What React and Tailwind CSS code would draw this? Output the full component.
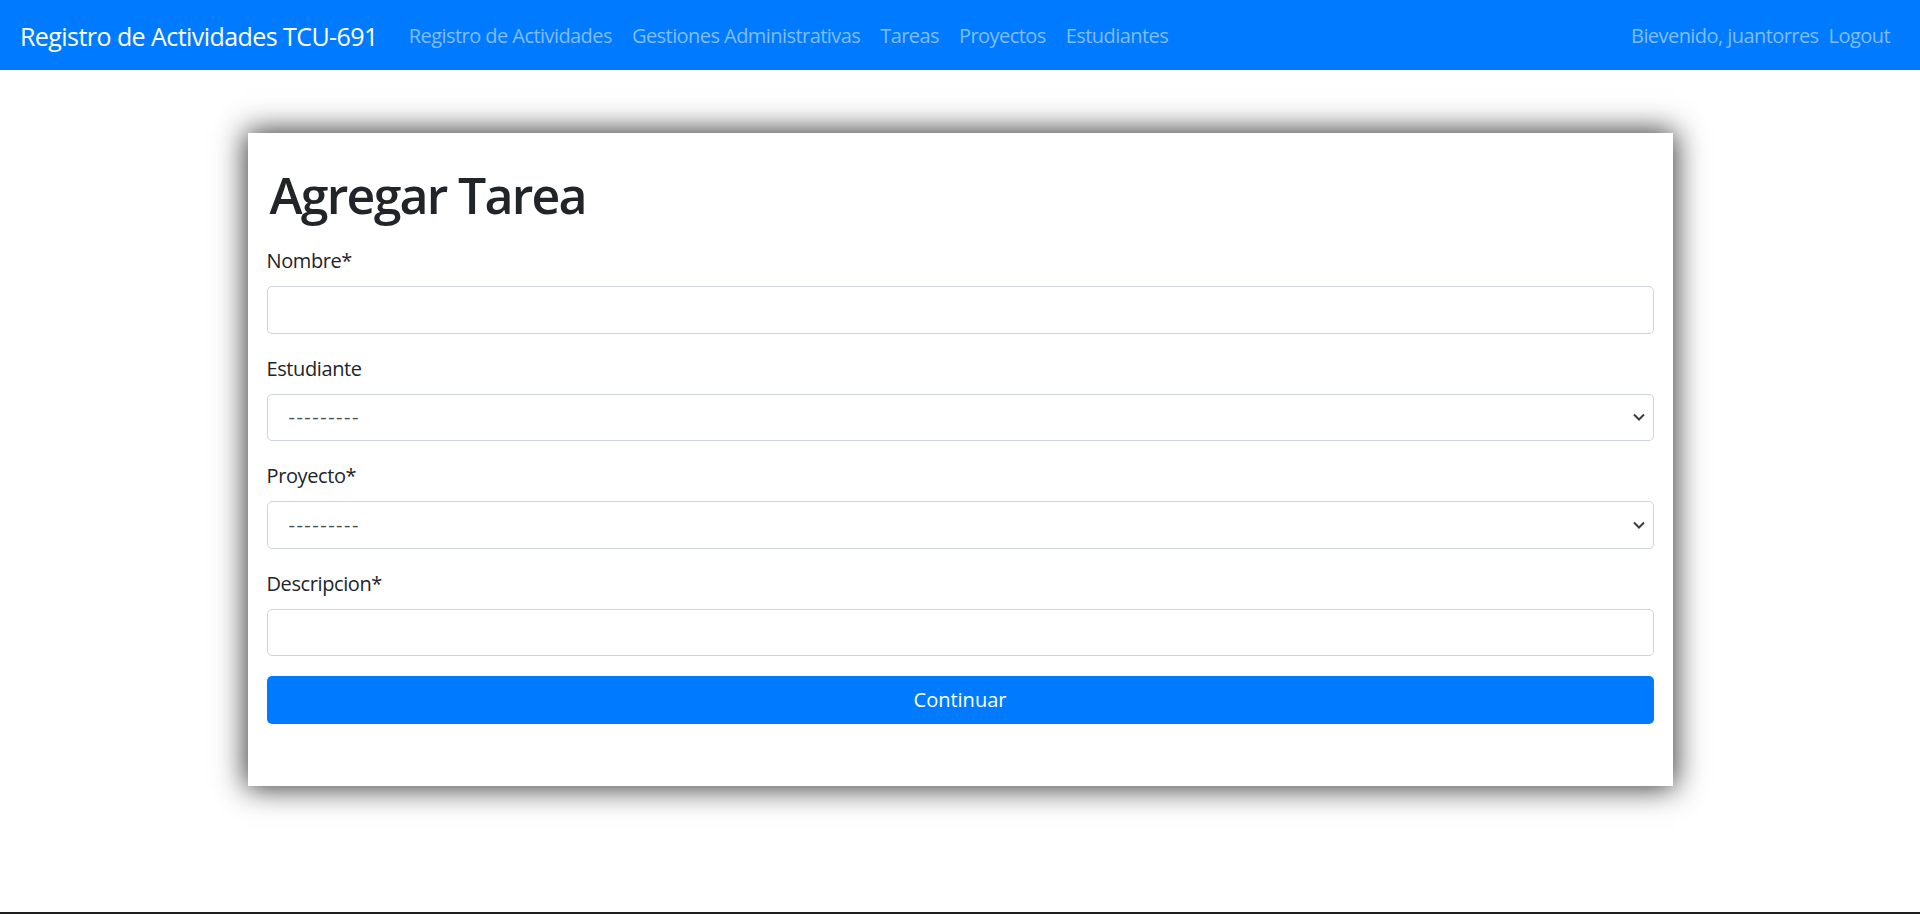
import { useState } from 'react'

const navLinks = ['Registro de Actividades', 'Gestiones Administrativas', 'Tareas', 'Proyectos', 'Estudiantes']

function Chevron() {
  return (
    <svg
      className="absolute right-[9px] top-1/2 -translate-y-1/2 pointer-events-none"
      width="12"
      height="8"
      viewBox="0 0 12 8"
      fill="none"
    >
      <path d="M1 1.5l5 5 5-5" stroke="#3a3d41" strokeWidth="2" />
    </svg>
  )
}

function Field({ label, children }) {
  return (
    <div className="mb-[20px]">
      <label className="block text-[20px] leading-[30px] mb-[10px] text-[#212529] tracking-[-0.02em]">{label}</label>
      {children}
    </div>
  )
}

function SelectBox({ value, onChange }) {
  return (
    <div className="relative">
      <select
        value={value}
        onChange={(e) => onChange(e.target.value)}
        className="appearance-none w-full h-[47.5px] border border-[#ced4da] rounded-[5px] bg-white pl-[21px] pr-[30px] text-[20px] tracking-[1.5px] text-[#495057] outline-none"
      >
        <option value="">---------</option>
      </select>
      <Chevron />
    </div>
  )
}

export default function App() {
  const [form, setForm] = useState({ nombre: '', estudiante: '', proyecto: '', descripcion: '' })
  const set = (k) => (v) => setForm({ ...form, [k]: v })

  return (
    <div
      className="h-screen flex flex-col bg-white border-b-2 border-[#1e1e1e]"
      style={{ fontFamily: '"Segoe UI", "Open Sans", sans-serif' }}
    >
      {/* Navbar */}
      <nav className="h-[70px] shrink-0 bg-[#007bff] flex items-center px-[20px] pt-[2px] tracking-[-0.035em]">
        <a className="text-[25px] text-white mr-[21px] leading-none">Registro de Actividades TCU-691</a>
        <ul className="flex">
          {navLinks.map((l) => (
            <li key={l}>
              <a className="px-[10px] text-[20px] text-[#80bdff]">{l}</a>
            </li>
          ))}
        </ul>
        <div className="ml-auto flex items-center text-[20px] text-[#80bdff]">
          <span>Bievenido, juantorres</span>
          <a className="px-[10px]">Logout</a>
        </div>
      </nav>

      {/* Card */}
      <main className="w-[1425px] mx-auto mt-[63px] bg-white px-[19px] pt-[32px] pb-[42px] shadow-[0_0_28px_2px_rgba(0,0,0,0.8)]">
        <h1 className="text-[50px] leading-[60px] font-semibold tracking-[-0.035em] text-[#212529] mb-[21px] pl-[3px]">
          Agregar Tarea
        </h1>
        <form onSubmit={(e) => e.preventDefault()}>
          <Field label="Nombre*">
            <input
              value={form.nombre}
              onChange={(e) => set('nombre')(e.target.value)}
              className="w-full h-[47.5px] border border-[#ced4da] rounded-[5px] px-[15px] text-[20px] outline-none"
            />
          </Field>
          <Field label="Estudiante">
            <SelectBox value={form.estudiante} onChange={set('estudiante')} />
          </Field>
          <Field label="Proyecto*">
            <SelectBox value={form.proyecto} onChange={set('proyecto')} />
          </Field>
          <Field label="Descripcion*">
            <input
              value={form.descripcion}
              onChange={(e) => set('descripcion')(e.target.value)}
              className="w-full h-[47.5px] border border-[#ced4da] rounded-[5px] px-[15px] text-[20px] outline-none"
            />
          </Field>
          <div className="mb-[20px]">
            <button type="submit" className="w-full h-[47.5px] bg-[#007bff] text-white text-[20px] rounded-[5px]">
              Continuar
            </button>
          </div>
        </form>
      </main>
    </div>
  )
}
